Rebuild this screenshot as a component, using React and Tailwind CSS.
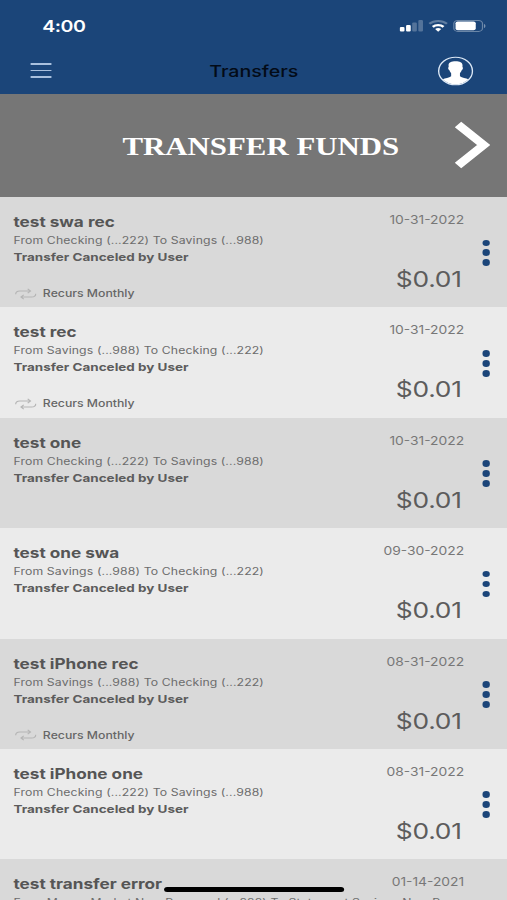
const TRANSFERS = [
  { title: "test swa rec", date: "10-31-2022", route: "From Checking (...222) To Savings (...988)", recurs: true },
  { title: "test rec", date: "10-31-2022", route: "From Savings (...988) To Checking (...222)", recurs: true },
  { title: "test one", date: "10-31-2022", route: "From Checking (...222) To Savings (...988)" },
  { title: "test one swa", date: "09-30-2022", route: "From Savings (...988) To Checking (...222)" },
  { title: "test iPhone rec", date: "08-31-2022", route: "From Savings (...988) To Checking (...222)", recurs: true },
  { title: "test iPhone one", date: "08-31-2022", route: "From Checking (...222) To Savings (...988)" },
  { title: "test transfer error", date: "01-14-2021", route: "From Money Market New Renamed (...222) To Statement Savings New Ren..." },
];

function StatusBar() {
  return (
    <div className="flex h-[52px] items-center justify-between pl-[34.500px] pr-[16px]">
      <span className="text-[16px] leading-none font-semibold tracking-[-0.4px] text-white">4:00</span>
      <svg width="72" height="16" viewBox="0 0 72 16" fill="#fff">
        <rect x="0.5" y="9" width="3.8" height="4.5" rx="1" />
        <rect x="5.6" y="7" width="3.8" height="6.5" rx="1" />
        <rect x="10.6" y="4.5" width="3.8" height="9" rx="1" opacity="0.25" />
        <rect x="15.6" y="2" width="3.8" height="11.5" rx="1" opacity="0.25" />
        <path d="M24.6 5.8a10.4 10.4 0 0 1 14.4 0" fill="none" stroke="#fff" strokeWidth="2" opacity="0.3" />
        <path d="M27.4 8.9a6.4 6.4 0 0 1 8.8 0" fill="none" stroke="#fff" strokeWidth="2.2" />
        <path d="M29.3 11.1a3.6 3.6 0 0 1 5 0l-2.5 2.7z" />
        <rect x="44.6" y="2.4" width="23.4" height="11" rx="3.2" fill="none" stroke="#fff" opacity="0.35" />
        <rect x="46" y="3.500" width="16.5" height="8.800" rx="1.8" />
        <path d="M69.3 6v4c1.4-.5 1.4-3.500 0-4z" opacity="0.45" />
      </svg>
    </div>
  );
}

function NavBar() {
  return (
    <div className="flex h-[40px] items-center justify-between pl-[25px] pr-[27px]">
      <div className="flex w-[31px] flex-col gap-[5px] pb-[3px]">
        <span className="h-[1.500px] w-[17px] bg-[#a9c0de]" />
        <span className="h-[1.500px] w-[17px] bg-[#a9c0de]" />
        <span className="h-[1.500px] w-[17px] bg-[#a9c0de]" />
      </div>
      <h1 className="pb-[2px] pl-[1.500px] text-[16px] leading-none font-medium text-[#030b17]">Transfers</h1>
      <svg width="30" height="30" viewBox="0 0 30 30" className="mb-0.5">
        <circle cx="15" cy="15" r="13.8" fill="#1b4579" stroke="#dce8f6" strokeWidth="1.1" />
        <path
          fill="#fff"
          d="M9.300 9.700C9.100 6.500 11.700 5.300 15 5.300s5.800 1.200 5.700 4.400c0 .6-.1 1-.1 1.300.7.200.5 2.800-.5 3.100-.3 1.400-1 2.500-1.500 3.200v3c1.500 1.700 5.200 1.800 6.800 3A13.400 13.400 0 0 1 15 28.500a13.400 13.400 0 0 1-10.400-5.200c1.600-1.200 5.300-1.300 6.800-3v-3c-.5-.7-1.200-1.800-1.500-3.200-1-.3-1.200-2.900-.5-3.100z"
        />
      </svg>
    </div>
  );
}

function RepeatIcon() {
  return (
    <svg width="18" height="12" viewBox="0 0 18 12" fill="none" stroke="#b5b5b5" strokeWidth="1">
      <path d="M.8 6.300C.8 4 2.200 3 4.200 3h8.500M10.600.8 12.900 3l-2.300 2.200M17.200 5.700c0 2.300-1.400 3.300-3.400 3.300H5.300M7.400 11.200 5.100 9l2.300-2.200" />
    </svg>
  );
}

function TransferRow({ item }) {
  return (
    <li className="flex h-[110.4px] shrink-0 pl-[11px] pr-[13.800px] odd:bg-[#d9d9d9] even:bg-[#ebebeb]">
      <div className="flex min-w-0 flex-1 flex-col whitespace-nowrap pt-[16px] text-[#555]">
        <h2 className="text-[14px] leading-[18px] font-bold">{item.title}</h2>
        <p className="mt-[2px] text-[10px] leading-[15px] tracking-[0.1px] text-[#6c6c6c]">{item.route}</p>
        <p className="mt-[1px] text-[11px] leading-[17px] font-bold text-[#5c5c5c]">Transfer Canceled by User</p>
        {item.recurs && (
          <div className="mt-[20px] flex items-center gap-[5px] pl-[1px] text-[10px] leading-[15px] font-medium text-[#666]">
            <RepeatIcon />
            Recurs Monthly
          </div>
        )}
      </div>
      <div className="flex shrink-0">
        <div className="flex flex-col items-end pt-[15px]">
          <time className="text-[11.300px] leading-[16px] text-[#777]">{item.date}</time>
          <span className="mt-[37px] pr-[2px] text-[21.500px] leading-[28px] tracking-[-0.2px] text-[#5c5c5c]">$0.01</span>
        </div>
        <div className="ml-[14.500px] flex flex-col gap-[3.300px] pt-[42.500px]">
          <span className="size-[6.700px] rounded-full bg-[#1b4579]" />
          <span className="size-[6.700px] rounded-full bg-[#1b4579]" />
          <span className="size-[6.700px] rounded-full bg-[#1b4579]" />
        </div>
      </div>
    </li>
  );
}

export default function App() {
  return (
    <div className="h-[900px] w-[507px] overflow-hidden">
      <div className="relative flex h-[900px] w-[414px] origin-top-left scale-x-[1.2246] flex-col overflow-hidden bg-[#d9d9d9] font-['Inter','Liberation_Sans',sans-serif]">
        <header className="h-[93.500px] shrink-0 bg-[#1b4579]">
          <StatusBar />
          <NavBar />
        </header>
        <button className="flex h-[103.500px] shrink-0 items-center justify-end bg-[#767676] pr-[13px] text-white">
          <span className="mr-[45px] pt-[3px] font-['Liberation_Serif',serif] text-[25.200px] leading-none font-bold">TRANSFER FUNDS</span>
          <svg width="30" height="48" viewBox="0 0 30 48" fill="none" stroke="#fff" strokeWidth="7.500">
            <path d="M3 3.500 24 24 3 44.500" />
          </svg>
        </button>
        <ul className="flex flex-col">
          {TRANSFERS.map((item) => (
            <TransferRow key={item.title} item={item} />
          ))}
        </ul>
        <div className="absolute top-[887px] left-[133.500px] h-[5px] w-[147.500px] rounded-full bg-black" />
      </div>
    </div>
  );
}
